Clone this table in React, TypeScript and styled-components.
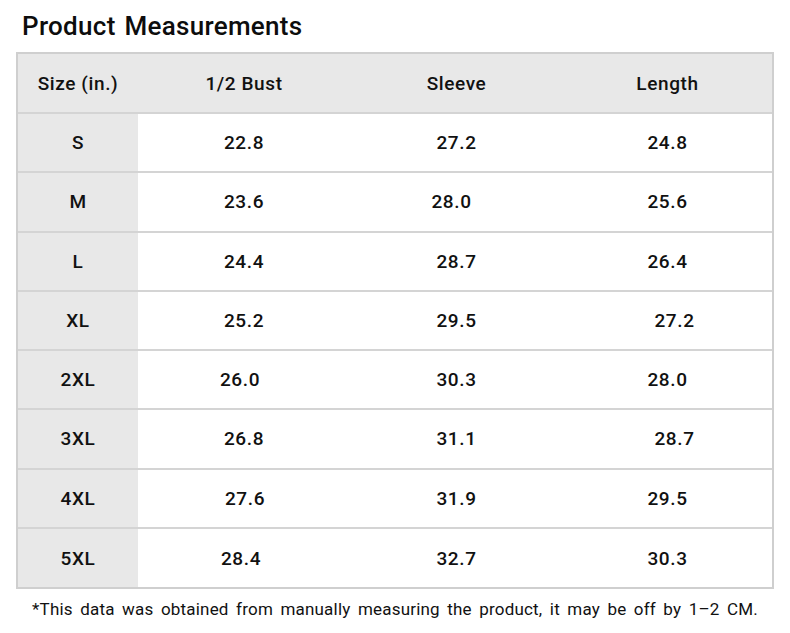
import styled, { createGlobalStyle } from 'styled-components';

const GlobalStyle = createGlobalStyle`
  body {
    margin: 0;
    background: #fff;
    font-family: Roboto, "Liberation Sans", sans-serif;
    color: #111;
  }
`;

type Row = { size: string; values: [string, number][] };

// second item = small horizontal nudge, the source image isn't perfectly centred
const rows: Row[] = [
  { size: 'S', values: [['22.8', 0], ['27.2', 0], ['24.8', 0]] },
  { size: 'M', values: [['23.6', 0], ['28.0', -5], ['25.6', 0]] },
  { size: 'L', values: [['24.4', 0], ['28.7', 0], ['26.4', 0]] },
  { size: 'XL', values: [['25.2', 0], ['29.5', 0], ['27.2', 7]] },
  { size: '2XL', values: [['26.0', -4], ['30.3', 0], ['28.0', 0]] },
  { size: '3XL', values: [['26.8', 0], ['31.1', 0], ['28.7', 7]] },
  { size: '4XL', values: [['27.6', 1], ['31.9', 0], ['29.5', 0]] },
  { size: '5XL', values: [['28.4', -3], ['32.7', 0], ['30.3', 0]] },
];

function App() {
  return (
    <>
      <GlobalStyle />
      <Page>
        <Title>Product Measurements</Title>
        <Table>
          <HeadRow>
            <SizeCell>Size (in.)</SizeCell>
            <Cell>1/2 Bust</Cell>
            <Cell>Sleeve</Cell>
            <Cell>Length</Cell>
          </HeadRow>
          {rows.map((r) => (
            <BodyRow key={r.size}>
              <SizeCell>{r.size}</SizeCell>
              {r.values.map(([v, shift], i) => (
                <Cell key={i} $shift={shift}>
                  {v}
                </Cell>
              ))}
            </BodyRow>
          ))}
        </Table>
        <Note>*This data was obtained from manually measuring the product, it may be off by 1–2 CM.</Note>
      </Page>
    </>
  );
}

export default App;

const Page = styled.div`
  width: 790px;
  height: 633px;
  padding: 11px 16px 0 16px;
  box-sizing: border-box;
`;

const Title = styled.h1`
  margin: 0 0 10px 6px;
  font-size: 26px;
  line-height: 31px;
  font-weight: 500;
  letter-spacing: 0.3px;
  word-spacing: 2px;
  color: #0d0d0d;
`;

const Table = styled.div`
  width: 758px;
  border: 2px solid #cfcfcf;
  box-sizing: border-box;
  display: flex;
  flex-direction: column;
`;

const HeadRow = styled.div`
  display: grid;
  grid-template-columns: 120px 212px 213px 1fr;
  height: 58px;
  background: #e8e8e8;
  border-bottom: 2px solid #d4d4d4;
`;

const BodyRow = styled.div`
  display: grid;
  grid-template-columns: 120px 212px 213px 1fr;
  height: 57.25px;
  background: #fff;
  border-bottom: 2px solid #d4d4d4;

  &:last-child {
    border-bottom: none;
    height: 58.5px;
  }
`;

const Cell = styled.div<{ $shift?: number }>`
  display: flex;
  align-items: center;
  justify-content: center;
  font-size: 19px;
  font-weight: 500;
  letter-spacing: 0.6px;
  color: #111;
  padding-left: ${(p) => (p.$shift && p.$shift > 0 ? p.$shift * 2 : 0)}px;
  padding-right: ${(p) => (p.$shift && p.$shift < 0 ? -p.$shift * 2 : 0)}px;
`;

const SizeCell = styled(Cell)`
  background: #e8e8e8;
`;

const Note = styled.p`
  margin: 10px 0 0 0;
  width: 758px;
  text-align: center;
  font-size: 17px;
  font-weight: 400;
  letter-spacing: 0.2px;
  word-spacing: 3px;
  color: #111;
`;
